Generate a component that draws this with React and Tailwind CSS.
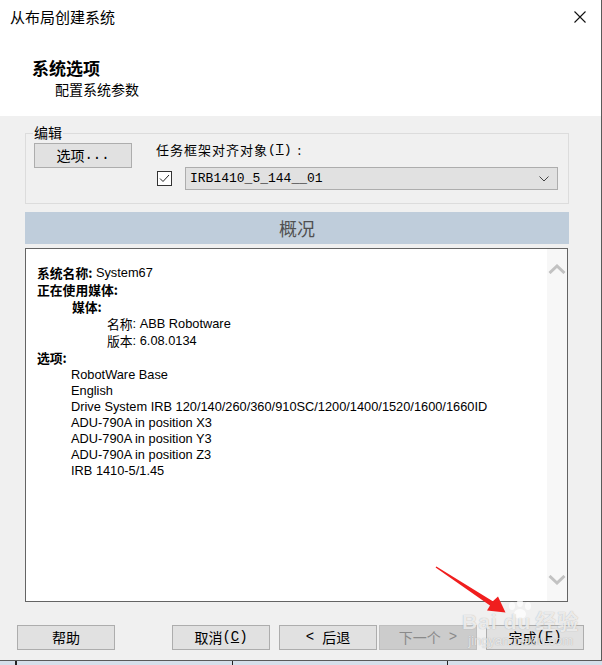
import React from "react";

const UI = "font-['Liberation_Sans','Noto_Sans_CJK_SC',sans-serif]";
const CJK = "font-['Noto_Sans_CJK_SC','Liberation_Sans',sans-serif]";
const MONO = "font-['Liberation_Mono','Noto_Sans_CJK_SC',monospace]";

function Btn({ children, className = "", disabled = false }) {
  return (
    <div
      className={
        "h-[25px] w-[98px] flex items-center justify-center text-[14px] border font-['Noto_Sans_CJK_SC','Liberation_Sans',sans-serif] " +
        (disabled
          ? "bg-[#cccccc] border-[#bfbfbf] text-[#8a8a8a] "
          : "bg-[#e1e1e1] border-[#adadad] text-black ") +
        className
      }
    >
      {children}
    </div>
  );
}

function Line({ h = "h-[17px]", indent = "pl-0", children }) {
  return (
    <div className={h + " " + indent + " flex items-center whitespace-nowrap"}>
      {children}
    </div>
  );
}

export default function App() {
  return (
    <div className="relative w-[602px] h-[665px] overflow-hidden bg-[#d5dfea] font-['Liberation_Sans','Noto_Sans_CJK_SC',sans-serif]">
      <div className="h-[661px] w-[602px] bg-[#f0f0f0] border-r border-b border-[#5a5a5a] flex flex-col">
        {/* white header */}
        <div className="bg-white h-[116px] flex flex-col">
          <div className="h-[34px] flex items-center justify-between pl-[10px] pr-[15px]">
            <span className="text-[15px] text-black font-['Noto_Sans_CJK_SC','Liberation_Sans',sans-serif]">从布局创建系统</span>
            <svg width="12" height="12" viewBox="0 0 12 12">
              <path d="M0.5 0.5 L11.5 11.5 M11.5 0.5 L0.5 11.5" stroke="#111" strokeWidth="1.1" fill="none" />
            </svg>
          </div>
          <div className="pl-[32px] pt-[23px] text-[17px] font-bold leading-[22px] text-black font-['Noto_Sans_CJK_SC','Liberation_Sans',sans-serif]">
            系统选项
          </div>
          <div className="pl-[55px] pt-[1px] text-[14px] leading-[18px] text-black font-['Noto_Sans_CJK_SC','Liberation_Sans',sans-serif]">
            配置系统参数
          </div>
        </div>

        {/* group box */}
        <div className="relative mt-[17px] ml-[25px] w-[544px] h-[71px] border border-[#dcdcdc]">
          <span className="absolute left-[7px] top-[-11px] px-[1px] bg-[#f0f0f0] text-[14px] leading-[18px] text-black font-['Noto_Sans_CJK_SC','Liberation_Sans',sans-serif]">
            编辑
          </span>
          <div className="flex pt-[9px] pl-[8px]">
            <div className="h-[25px] w-[98px] bg-[#e1e1e1] border border-[#adadad] flex items-center justify-center text-[14px] text-black font-['Noto_Sans_CJK_SC','Liberation_Sans',sans-serif]">
              选项<span className="font-['Liberation_Mono',monospace]">...</span>
            </div>
            <div className="ml-[24px] flex flex-col">
              <div className="h-[18px] mt-[-2px] flex items-center text-[13px] text-black whitespace-nowrap tracking-[1px] font-['Noto_Sans_CJK_SC','Liberation_Sans',sans-serif]">
                任务框架对齐对象<span className="font-['Liberation_Mono',monospace] tracking-normal">(<u>T</u>)</span>
                <span className="ml-[6px]">:</span>
              </div>
              <div className="flex items-center mt-[8px]">
                <div className="ml-[1px] w-[15px] h-[15px] bg-white border border-[#333333] flex items-center justify-center">
                  <svg width="11" height="9" viewBox="0 0 11 9">
                    <path d="M1 4.5 L4 7.5 L10 1" stroke="#222" strokeWidth="1" fill="none" />
                  </svg>
                </div>
                <div className="ml-[13px] w-[373px] h-[23px] bg-[#e1e1e1] border border-[#adadad] flex items-center justify-between pl-[4px] pr-[8px]">
                  <span className="text-[13px] text-black font-['Liberation_Mono',monospace]">IRB1410_5_144__01</span>
                  <svg width="10" height="6" viewBox="0 0 10 6">
                    <path d="M0.5 0.5 L5 5 L9.5 0.5" stroke="#444" strokeWidth="1" fill="none" />
                  </svg>
                </div>
              </div>
            </div>
          </div>
        </div>

        {/* overview bar */}
        <div className="mt-[8px] ml-[25px] w-[544px] h-[32px] bg-[#bfcddb] flex items-center justify-center text-[18px] text-[#505050] font-['Noto_Sans_CJK_SC','Liberation_Sans',sans-serif]">
          概况
        </div>

        {/* content box */}
        <div className="mt-[4px] ml-[25px] w-[543px] h-[354px] bg-white border border-[#646464] flex">
          <div className="flex-1 pl-[11px] pt-[15px] text-[12.8px] text-black">
            <Line>
              <b className="font-['Noto_Sans_CJK_SC',sans-serif]">系统名称:</b>&nbsp;System67
            </Line>
            <Line>
              <b className="font-['Noto_Sans_CJK_SC',sans-serif]">正在使用媒体:</b>
            </Line>
            <Line indent="pl-[35px]">
              <b className="font-['Noto_Sans_CJK_SC',sans-serif]">媒体:</b>
            </Line>
            <Line indent="pl-[70px]">
              <span className="font-['Noto_Sans_CJK_SC',sans-serif]">名称</span>:&nbsp;ABB Robotware
            </Line>
            <Line indent="pl-[70px]">
              <span className="font-['Noto_Sans_CJK_SC',sans-serif]">版本</span>:&nbsp;6.08.0134
            </Line>
            <Line>
              <b className="font-['Noto_Sans_CJK_SC',sans-serif]">选项:</b>
            </Line>
            <Line indent="pl-[34px]">RobotWare Base</Line>
            <Line h="h-[16px]" indent="pl-[34px]">English</Line>
            <Line h="h-[16px]" indent="pl-[34px]">
              Drive System IRB 120/140/260/360/910SC/1200/1400/1520/1600/1660ID
            </Line>
            <Line h="h-[16px]" indent="pl-[34px]">ADU-790A in position X3</Line>
            <Line h="h-[16px]" indent="pl-[34px]">ADU-790A in position Y3</Line>
            <Line h="h-[16px]" indent="pl-[34px]">ADU-790A in position Z3</Line>
            <Line h="h-[16px]" indent="pl-[34px]">IRB 1410-5/1.45</Line>
          </div>
          <div className="w-[20px] bg-[#f7f7f7] flex flex-col justify-between items-center pt-[15px] pb-[16px]">
            <svg width="18" height="10" viewBox="0 0 18 10">
              <path d="M1.5 9 L9 2 L16.5 9" stroke="#c2c2c2" strokeWidth="3" fill="none" />
            </svg>
            <svg width="18" height="10" viewBox="0 0 18 10">
              <path d="M1.5 1 L9 8 L16.5 1" stroke="#c2c2c2" strokeWidth="3" fill="none" />
            </svg>
          </div>
        </div>

        {/* buttons */}
        <div className="mt-[23px] flex pl-[17px]">
          <Btn>帮助</Btn>
          <Btn className="ml-[57px]">
            取消<span className="font-['Liberation_Mono',monospace]">(<u>C</u>)</span>
          </Btn>
          <Btn className="ml-[9px]">
            <span className="mr-[8px] font-['Liberation_Mono',monospace]">&lt;</span>后退
          </Btn>
          <Btn className="ml-[2px]" disabled>
            下一个<span className="ml-[8px] font-['Liberation_Mono',monospace]">&gt;</span>
          </Btn>
          <Btn className="ml-[9px]">
            完成<span className="font-['Liberation_Mono',monospace]">(<u>F</u>)</span>
          </Btn>
        </div>
      </div>

      {/* bottom strip separators */}
      <div className="flex h-[4px]">
        <div className="ml-[15px] w-[2px] bg-[#222]" />
        <div className="ml-[215px] w-[1px] bg-[#222]" />
        <div className="ml-[214px] w-[1px] bg-[#222]" />
      </div>

      {/* overlay: red arrow + watermark paw */}
      <svg className="absolute left-0 top-0 pointer-events-none" width="602" height="665" viewBox="0 0 602 665">
        <polygon
          points="436.4,566.4 492.8,601.2 498,596.5 505.5,612.5 487,610.5 490,605.4 435.6,567.6"
          fill="#f01e1e"
        />
        <g fill="#ffffff" opacity="0.75">
          <ellipse cx="512" cy="606" rx="3" ry="4" />
          <ellipse cx="520" cy="603" rx="3" ry="4" />
          <ellipse cx="528" cy="606" rx="3" ry="4" />
          <ellipse cx="520" cy="614" rx="6" ry="5" />
        </g>
      </svg>
      <div className="absolute left-[462px] top-[608px] pointer-events-none flex flex-col items-center">
        <div className="text-[21px] font-bold leading-[24px] text-white/75 tracking-[1px] [text-shadow:0_0_1px_rgba(120,120,120,0.6)]">
          Bai<span className="ml-[6px]">du</span>
          <span className="ml-[4px] font-['Noto_Sans_CJK_SC',sans-serif]">经验</span>
        </div>
        <div className="text-[13px] leading-[14px] text-white/70 [text-shadow:0_0_1px_rgba(120,120,120,0.6)]">
          jingyan.baidu.com
        </div>
      </div>
    </div>
  );
}
